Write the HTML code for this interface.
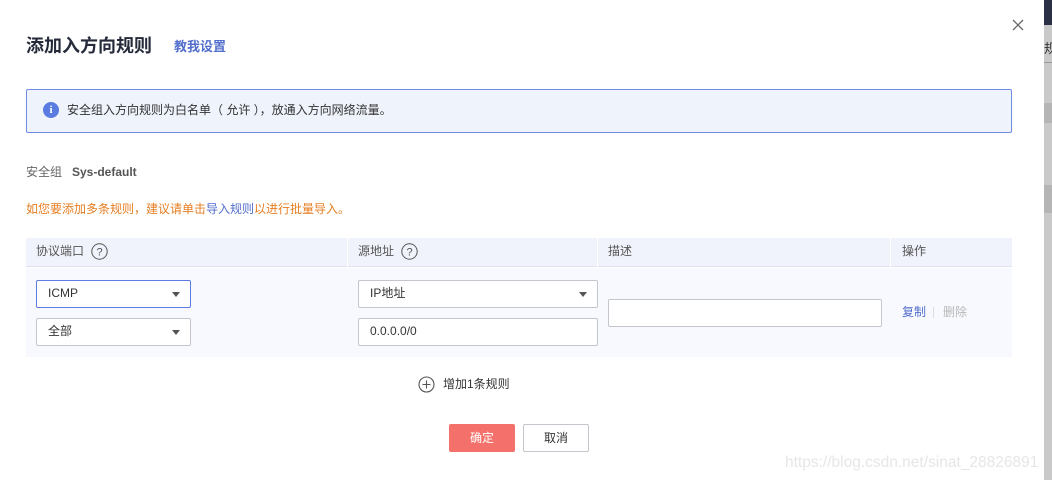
<!DOCTYPE html>
<html><head><meta charset="utf-8"><style>
*{margin:0;padding:0;box-sizing:border-box}
body{width:1052px;height:480px;overflow:hidden;background:#fff;font-family:"Liberation Sans","Noto Sans CJK SC",sans-serif;position:relative;color:#333}
.a{position:absolute;white-space:nowrap}
.sel{position:absolute;border:1px solid #c3c6cc;border-radius:2px;background:#fff;font-size:12px;color:#333;padding-left:11px;line-height:25px}
.sel .arr{position:absolute;right:10px;top:11px;width:0;height:0;border-left:4px solid transparent;border-right:4px solid transparent;border-top:5px solid #555}
</style></head><body>
<div class="a" style="left:1044px;top:0;width:8px;height:480px;background:#c9c9c9"></div>
<div class="a" style="left:1044px;top:0;width:8px;height:25px;background:#2b3045"></div>
<div class="a" style="left:1044px;top:62px;width:8px;height:1px;background:#999"></div>
<div class="a" style="left:1044px;top:103px;width:8px;height:20px;background:#b5b5b5"></div>
<div class="a" style="left:1044px;top:185px;width:8px;height:28px;background:#b5b5b5"></div>
<div class="a" style="left:1044px;top:38px;font-size:13px;color:#333">规</div>

<svg class="a" style="left:1012px;top:19px" width="12" height="12" viewBox="0 0 12 12"><path d="M1 1L11 11M11 1L1 11" stroke="#666" stroke-width="1.3"/></svg>
<div class="a" style="left:26px;top:35px;font-size:18px;font-weight:bold;color:#252b3a;line-height:22px">添加入方向规则</div>
<div class="a" style="left:174px;top:38px;font-size:13px;font-weight:bold;color:#526ecc;line-height:17px">教我设置</div>

<div class="a" style="left:26px;top:89px;width:986px;height:44px;background:#eff3fc;border:1px solid #6e8be6;border-radius:2px"></div>
<div class="a" style="left:43px;top:102px;width:16px;height:16px;border-radius:50%;background:#5a7ce0;color:#fff;font-size:11px;font-weight:bold;text-align:center;line-height:16px;font-family:'Liberation Serif',serif">i</div>
<div class="a" style="left:67px;top:103px;font-size:12px;color:#333;line-height:15px">安全组入方向规则为白名单（ 允许 ），放通入方向网络流量。</div>

<div class="a" style="left:26px;top:165px;font-size:12px;color:#666;line-height:15px">安全组</div>
<div class="a" style="left:72px;top:165px;font-size:12px;color:#555;font-weight:bold;line-height:15px">Sys-default</div>
<div class="a" style="left:26px;top:202px;font-size:12px;color:#e67e22;line-height:15px">如您要添加多条规则，建议请单击<span style="color:#526ecc">导入规则</span>以进行批量导入。</div>

<div class="a" style="left:26px;top:238px;width:986px;height:29px;background:#f0f3fb;border-bottom:1px solid #dde2ec"></div>
<div class="a" style="left:26px;top:268px;width:986px;height:89px;background:#f8f9fe"></div>
<div class="a" style="left:347px;top:238px;width:1px;height:29px;background:#fff"></div>
<div class="a" style="left:597px;top:238px;width:1px;height:29px;background:#fff"></div>
<div class="a" style="left:890px;top:238px;width:1px;height:29px;background:#fff"></div>
<div class="a" style="left:36px;top:244px;font-size:12px;color:#555;line-height:15px">协议端口</div>
<svg class="a" style="left:91px;top:243px" width="17" height="17" viewBox="0 0 17 17"><circle cx="8.5" cy="8.5" r="7.7" fill="none" stroke="#555" stroke-width="1"/><text x="8.5" y="12.5" font-size="11" text-anchor="middle" fill="#555" font-family="Liberation Sans">?</text></svg>
<div class="a" style="left:358px;top:244px;font-size:12px;color:#555;line-height:15px">源地址</div>
<svg class="a" style="left:401px;top:243px" width="17" height="17" viewBox="0 0 17 17"><circle cx="8.5" cy="8.5" r="7.7" fill="none" stroke="#555" stroke-width="1"/><text x="8.5" y="12.5" font-size="11" text-anchor="middle" fill="#555" font-family="Liberation Sans">?</text></svg>
<div class="a" style="left:608px;top:244px;font-size:12px;color:#555;line-height:15px">描述</div>
<div class="a" style="left:902px;top:244px;font-size:12px;color:#555;line-height:15px">操作</div>

<div class="sel" style="left:36px;top:280px;width:155px;height:28px;border-color:#5b7be0">ICMP<span class="arr"></span></div>
<div class="sel" style="left:36px;top:318px;width:155px;height:28px">全部<span class="arr"></span></div>
<div class="sel" style="left:358px;top:280px;width:240px;height:28px">IP地址<span class="arr"></span></div>
<div class="sel" style="left:358px;top:318px;width:240px;height:28px">0.0.0.0/0</div>
<div class="sel" style="left:608px;top:299px;width:274px;height:28px"></div>
<div class="a" style="left:902px;top:305px;font-size:12px;color:#526ecc;line-height:15px">复制</div>
<div class="a" style="left:933px;top:307px;width:1px;height:11px;background:#ddd"></div>
<div class="a" style="left:943px;top:305px;font-size:12px;color:#b8b8b8;line-height:15px">删除</div>

<svg class="a" style="left:418px;top:376px" width="17" height="17" viewBox="0 0 17 17"><circle cx="8.5" cy="8.5" r="7.5" fill="none" stroke="#555" stroke-width="1.1"/><path d="M8.5 4.5V12.5M4.5 8.5H12.5" stroke="#555" stroke-width="1.1"/></svg>
<div class="a" style="left:443px;top:377px;font-size:12px;color:#333;line-height:15px">增加1条规则</div>

<div class="a" style="left:449px;top:424px;width:66px;height:28px;background:#f4716b;border-radius:2px;color:#fff;font-size:12px;text-align:center;line-height:28px">确定</div>
<div class="a" style="left:523px;top:424px;width:66px;height:28px;border:1px solid #c3c6cc;border-radius:2px;color:#333;font-size:12px;text-align:center;line-height:26px">取消</div>

<div class="a" style="left:785px;top:453px;font-size:15.5px;color:#e6e6e6;line-height:20px">https://blog.csdn.net/sinat_28826891</div>
</body></html>
